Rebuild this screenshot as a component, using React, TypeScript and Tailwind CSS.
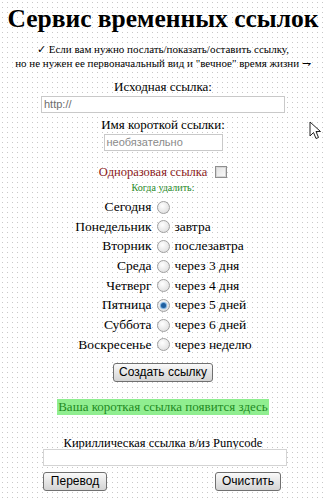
import type { ReactNode } from 'react'

const days = [
  { day: 'Сегодня', when: '' },
  { day: 'Понедельник', when: 'завтра' },
  { day: 'Вторник', when: 'послезавтра' },
  { day: 'Среда', when: 'через 3 дня' },
  { day: 'Четверг', when: 'через 4 дня' },
  { day: 'Пятница', when: 'через 5 дней', checked: true },
  { day: 'Суббота', when: 'через 6 дней' },
  { day: 'Воскресенье', when: 'через неделю' },
]

function Radio({ checked }: { checked?: boolean }) {
  return (
    <span className="flex h-[13px] w-[13px] items-center justify-center rounded-full border border-[#a0a0a0] bg-[radial-gradient(circle_at_40%_35%,#ffffff,#d8d8d8)]">
      {checked && <span className="h-[5px] w-[5px] rounded-full bg-[#1f5f9f] shadow-[0_0_1px_1px_#6fa8dc]" />}
    </span>
  )
}

function XpButton({ children, className }: { children: ReactNode; className?: string }) {
  return (
    <button
      type="button"
      className={`h-[19px] whitespace-nowrap rounded-[3px] border border-[#707070] bg-[linear-gradient(#fafafa,#e6e6e6_50%,#d4d4d4)] px-0 font-['Liberation_Sans',Arial,sans-serif] text-[12px] leading-[17px] text-black ${className ?? ''}`}
    >
      {children}
    </button>
  )
}

function Cursor() {
  return (
    <svg className="absolute left-[309px] top-[121px]" width="13" height="20" viewBox="0 0 13 20">
      <path d="M1 1 L1 15 L4.5 11.5 L7 17.5 L9.5 16.5 L7 10.5 L11.5 10.5 Z" fill="#fff" stroke="#222" strokeWidth="1" strokeLinejoin="miter" />
    </svg>
  )
}

export default function App() {
  return (
    <div className="relative h-[500px] w-[326px] overflow-hidden bg-white bg-[radial-gradient(#c8c8c8_0.6px,transparent_0.9px)] bg-[length:5px_5px] font-['Liberation_Serif','Times_New_Roman',serif] text-black">
      <Cursor />
      <div className="flex flex-col items-center">
        <h1 className="mt-[4px] whitespace-nowrap text-[25.5px] font-bold leading-[30px]">Сервис временных ссылок</h1>

        <p className="mt-[8px] text-center text-[11px] leading-[14px]">
          ✓ Если вам нужно послать/показать/оставить ссылку,
          <br />
          но не нужен ее первоначальный вид и "вечное" время жизни ⇁
        </p>

        <label className="mt-[9px] text-[13px] leading-[16px]">Исходная ссылка:</label>
        <div className="mt-[1px] flex h-[17px] w-[244px] items-center border border-[#c9c9c9] bg-white px-[2px] font-['Liberation_Sans',Arial,sans-serif] text-[11px] text-[#6d6d6d]">
          http://
        </div>

        <label className="mt-[4px] text-[13px] leading-[16px]">Имя короткой ссылки:</label>
        <div className="mt-[1px] flex h-[17px] w-[119px] items-center border border-[#c9c9c9] bg-white px-[2px] font-['Liberation_Sans',Arial,sans-serif] text-[11px] text-[#8a8a8a]">
          необязательно
        </div>

        <div className="mt-[13px] flex items-center gap-[8px]">
          <span className="text-[12.5px] leading-[16px] text-[#8b1a1a]">Одноразовая ссылка</span>
          <span className="h-[12px] w-[12px] border border-[#8f8f8f] bg-[linear-gradient(135deg,#e2e2e2,#fbfbfb)] shadow-[inset_0_0_0_1px_#d6d6d6]" />
        </div>

        <p className="mt-[1px] text-[10px] leading-[14px] text-[#1f8a1f]">Когда удалить:</p>

        <div className="mt-[5px] grid w-full grid-cols-[1fr_auto_1fr] items-center gap-x-[5px] gap-y-[5.7px] text-[13.5px] leading-[14px]">
          {days.map((d) => (
            <div key={d.day} className="contents">
              <span className="text-right">{d.day}</span>
              <Radio checked={d.checked} />
              <span>{d.when}</span>
            </div>
          ))}
        </div>

        <XpButton className="mt-[11px] w-[100px]">Создать ссылку</XpButton>

        <p className="mt-[17px] bg-[#90ee90] px-[1px] text-[13px] leading-[16px] text-[#228b22]">
          Ваша короткая ссылка появится здесь
        </p>

        <label className="mt-[20px] text-[12.5px] leading-[16px]">Кириллическая ссылка в/из Punycode</label>
        <div className="ml-[4px] mt-[-2px] flex w-[244px] flex-col gap-[6px]">
          <div className="h-[17px] w-full border border-[#d4d4d4] bg-white" />
          <div className="flex items-center justify-between pr-[6px]">
            <XpButton className="w-[64px]">Перевод</XpButton>
            <XpButton className="w-[66px]">Очистить</XpButton>
          </div>
        </div>
      </div>
    </div>
  )
}
